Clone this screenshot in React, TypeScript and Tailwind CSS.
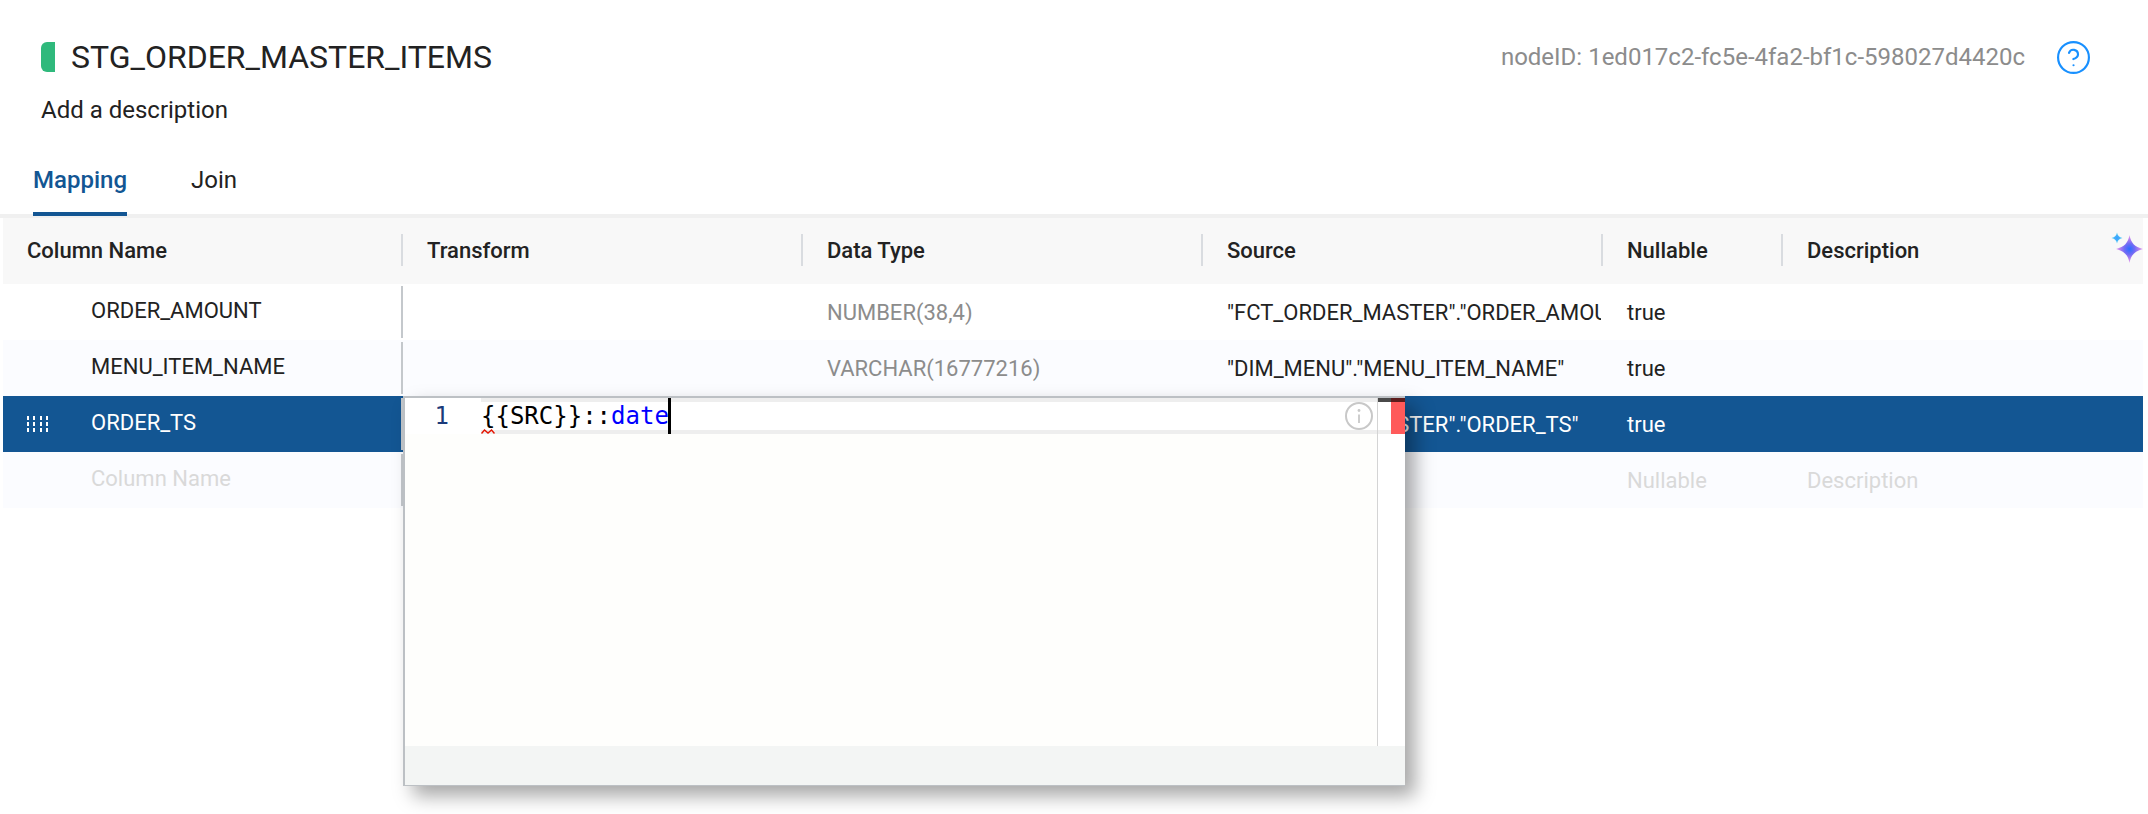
import { CircleHelp } from "lucide-react";

const gridCols = "grid grid-cols-[398px_400px_400px_400px_180px_362px]";

const rows = [
  { name: "ORDER_AMOUNT", type: "NUMBER(38,4)", source: '"FCT_ORDER_MASTER"."ORDER_AMOUNT"', nullable: "true" },
  { name: "MENU_ITEM_NAME", type: "VARCHAR(16777216)", source: '"DIM_MENU"."MENU_ITEM_NAME"', nullable: "true" },
  { name: "ORDER_TS", type: "TIMESTAMP_NTZ(9)", source: '"FCT_ORDER_MASTER"."ORDER_TS"', nullable: "true", selected: true },
];

const Sparkle = () => (
  <svg width="32" height="32" viewBox="0 0 32 32" className="ml-auto -mt-[4px]">
    <defs>
      <radialGradient id="bigStar" cx="50%" cy="50%" r="50%">
        <stop offset="0%" stopColor="#2a6cff" />
        <stop offset="38%" stopColor="#6d6bf5" />
        <stop offset="72%" stopColor="#b97fee" />
        <stop offset="100%" stopColor="#e6a8f0" />
      </radialGradient>
      <radialGradient id="smallStar" cx="50%" cy="50%" r="50%">
        <stop offset="0%" stopColor="#3f9bff" />
        <stop offset="100%" stopColor="#45d0f5" />
      </radialGradient>
    </defs>
    <path d="M18.5 3C20 11 23.5 14.8 32 17C23.5 19.2 20 23 18.5 31C17 23 13.5 19.2 5 17C13.5 14.8 17 11 18.5 3Z" fill="url(#bigStar)" />
    <path d="M6 0.5C6.5 3.6 8 5.2 11.5 6C8 6.8 6.5 8.4 6 11.5C5.5 8.4 4 6.8 0.5 6C4 5.2 5.5 3.6 6 0.5Z" fill="url(#smallStar)" />
  </svg>
);

const InfoMark = () => (
  <svg width="30" height="30" viewBox="0 0 30 30" className="-my-[4px]" fill="none" stroke="#c8c8c8">
    <circle cx="15" cy="15" r="13" strokeWidth="2" />
    <circle cx="15" cy="9.5" r="1.4" fill="#c8c8c8" stroke="none" />
    <path d="M15 13.5V22" strokeWidth="1.8" />
  </svg>
);

const DragHandle = () => (
  <div className="grid grid-cols-[2px_2px_2px_2px] justify-between gap-y-[2px] w-[21px] shrink-0">
    {Array.from({ length: 12 }).map((_, i) => (
      <span key={i} className="w-[2px] h-[4px] bg-white" />
    ))}
  </div>
);

const HeaderCell = ({ label, first }: { label: string; first?: boolean }) => (
  <div className="flex items-center h-full">
    {first ? <span className="pl-[24px]">{label}</span> : <span className="w-[2px] h-[32px] bg-[#d9dce0]" />}
    {!first && <span className="ml-[24px]">{label}</span>}
  </div>
);

const App = () => {
  return (
    <div className="relative w-[2148px] h-[814px] overflow-hidden bg-white font-['Roboto',sans-serif] text-[#222222]">
      <div className="flex items-start justify-between pl-[41px] pr-[56px] pt-[42px] h-[140px]">
        <div>
          <div className="flex items-center h-[30px] gap-[16px]">
            <span className="w-[14px] h-[30px] rounded-l-[6px] bg-[#2fb97c]" />
            <h1 className="text-[32px] leading-none">STG_ORDER_MASTER_ITEMS</h1>
          </div>
          <p className="mt-[24px] text-[24px] leading-[28px]">Add a description</p>
        </div>
        <div className="flex items-center h-[30px] gap-[30px]">
          <span className="text-[24px] text-[#8c8c8c]">nodeID: 1ed017c2-fc5e-4fa2-bf1c-598027d4420c</span>
          <CircleHelp className="w-[37px] h-[37px] text-[#1890ff]" strokeWidth={1.4} />
        </div>
      </div>

      <div className="flex h-[78px] pl-[33px] gap-[64px] text-[24px] border-b-4 border-[#f0f0f0]">
        <div className="h-[76px] pt-[22px] border-b-4 border-[#135693] text-[#135693] font-medium">Mapping</div>
        <div className="pt-[22px]">Join</div>
      </div>

      <div className="mx-[3px] w-[2140px] text-[22px]">
        <div className={`${gridCols} h-[66px] pb-[2px] items-center bg-[#f8f8f8] font-medium`}>
          <HeaderCell label="Column Name" first />
          <HeaderCell label="Transform" />
          <HeaderCell label="Data Type" />
          <HeaderCell label="Source" />
          <HeaderCell label="Nullable" />
          <div className="flex items-center h-full">
            <span className="w-[2px] h-[32px] bg-[#d9dce0]" />
            <span className="ml-[24px]">Description</span>
            <Sparkle />
          </div>
        </div>

        {rows.map((row, i) => (
          <div
            key={row.name}
            className={`${gridCols} h-[56px] items-center ${
              row.selected ? "bg-[#135693] text-white" : i === 0 ? "bg-white" : "bg-[#fbfcff]"
            }`}
          >
            <div className="flex items-center h-full -mr-[2px]">
              <div className="w-[88px] pl-[24px]">{row.selected && <DragHandle />}</div>
              <span className="flex-1 -mt-[4px]">{row.name}</span>
              <span className="w-[2px] h-[52px] bg-[#c4c8cc]" />
            </div>
            <div />
            <span className={`pl-[26px] ${row.selected ? "" : "text-[#8c8c8c]"}`}>{row.type}</span>
            <span className="pl-[26px] pr-[1px] overflow-hidden whitespace-nowrap">{row.source}</span>
            <span className="pl-[26px]">{row.nullable}</span>
            <div />
          </div>
        ))}

        <div className={`${gridCols} h-[56px] items-center bg-[#fbfcff] text-[#d9d9d9]`}>
          <div className="flex items-center h-full -mr-[2px]">
            <span className="flex-1 pl-[88px] -mt-[4px]">Column Name</span>
            <span className="w-[2px] h-[52px] bg-[#c4c8cc]" />
          </div>
          <div />
          <div />
          <div />
          <span className="pl-[26px]">Nullable</span>
          <span className="pl-[26px]">Description</span>
        </div>
      </div>

      {/* transform editor popup */}
      <div className="absolute left-[403px] top-[396px] w-[1002px] h-[390px] flex flex-col bg-[#fefefc] border-l-2 border-t-2 border-b border-[#bcc0c4] shadow-[10px_10px_18px_rgba(0,0,0,0.35)]">
        <div className="flex flex-1 min-h-0">
          <div className="flex-1 flex items-start">
            <div className="w-[76px] h-[36px] bg-white pr-[32px] text-right font-['DejaVu_Sans_Mono',monospace] text-[24px] leading-[36px] text-[#1b3a7a]">
              1
            </div>
            <div className="relative flex-1 flex items-center justify-between h-[36px] pr-[3px] bg-white border-t-[4px] border-b-[4px] border-[#eeeeee] font-['DejaVu_Sans_Mono',monospace] text-[24px] leading-[28px] text-black">
              <div className="flex items-center">
                <span>{"{{SRC}}::"}</span>
                <span className="text-[#0000ff]">date</span>
                <span className="w-[3px] h-[36px] -my-[4px] -ml-[1px] bg-black" />
              </div>
              <InfoMark />
              <svg width="14" height="5" viewBox="0 0 14 5" className="absolute left-0 top-[27px]">
                <path d="M0.5 4.5L3.5 1L7 4L10.5 1L13.5 4.5" fill="none" stroke="#e51400" strokeWidth="1.4" />
              </svg>
            </div>
          </div>
          <div className="w-[28px] bg-white border-l border-[#d4d4d4] flex flex-col">
            <div className="flex h-[4px]">
              <span className="w-[13px] bg-[#4a4a4a]" />
              <span className="flex-1 bg-[#5c1c1c]" />
            </div>
            <div className="flex h-[32px]">
              <div className="w-[13px] flex flex-col justify-end">
                <span className="h-[4px] bg-[#eeeeee]" />
              </div>
              <span className="flex-1 bg-[#ff5a5a]" />
            </div>
          </div>
        </div>
        <div className="h-[39px] bg-[#f3f5f4]" />
      </div>
    </div>
  );
};

export default App;
